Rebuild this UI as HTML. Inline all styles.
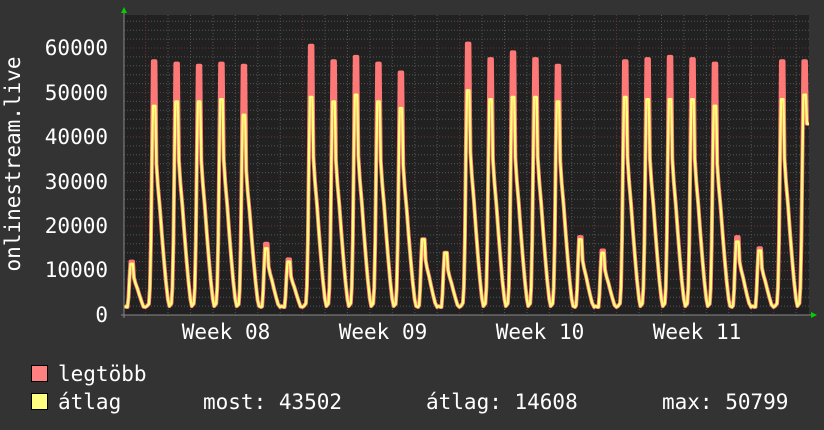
<!DOCTYPE html>
<html><head><meta charset="utf-8"><style>
html,body{margin:0;padding:0;background:#333333;}
svg{display:block}
text{font-family:"DejaVu Sans Mono","Liberation Mono",monospace;font-size:21px;fill:#ffffff}
</style></head><body>
<svg id="g" width="824" height="430" xmlns="http://www.w3.org/2000/svg">
<rect width="824" height="430" fill="#333333"/>
<rect x="124" y="15" width="685" height="300" fill="#212121"/>
<g id="grid"></g>
<defs><clipPath id="cp"><rect x="124" y="10" width="685" height="306"/></clipPath></defs>
<g clip-path="url(#cp)">
<path id="red" fill="none" stroke="#ff7878" stroke-width="4" stroke-linejoin="round"/>
<path id="yel" fill="none" stroke="#ffff78" stroke-width="2.4" stroke-linejoin="round"/>
</g>
<line x1="124" y1="12" x2="124" y2="318" stroke="#888" stroke-width="1"/>
<line x1="121" y1="315" x2="812" y2="315" stroke="#888" stroke-width="1"/>
<polygon points="121,13 127,13 124,7" fill="#00d000"/>
<polygon points="811,312 811,318 817,315" fill="#00d000"/>
<g text-anchor="end">
<text x="108" y="322">0</text>
<text x="108" y="277">10000</text>
<text x="108" y="233">20000</text>
<text x="108" y="189">30000</text>
<text x="108" y="144">40000</text>
<text x="108" y="100">50000</text>
<text x="108" y="55">60000</text>
</g>
<text transform="translate(20,164) rotate(-90)" text-anchor="middle">onlinestream.live</text>
<g text-anchor="middle">
<text x="226" y="339">Week 08</text>
<text x="383" y="339">Week 09</text>
<text x="540" y="339">Week 10</text>
<text x="697" y="339">Week 11</text>
</g>
<rect x="31.5" y="365.5" width="16" height="16" fill="#ff8080" stroke="#000"/>
<rect x="31.5" y="393.5" width="16" height="16" fill="#ffff80" stroke="#000"/>
<text x="58" y="381">legtöbb</text>
<text x="58" y="409">átlag</text>
<text x="203" y="409">most: 43502</text>
<text x="426" y="409">átlag: 14608</text>
<text x="662" y="409">max: 50799</text>
</svg>
<script>
var g=document.getElementById("grid"),s="";
function Y(v){return 315-v*0.00445;}
for(var v=2000;v<=66000;v+=2000){var y=Y(v);if(y<15)break;var maj=v%10000==0;
s+='<line x1="124" x2="809" y1="'+y.toFixed(1)+'" y2="'+y.toFixed(1)+'" stroke="'+(maj?'#6a3535':'#555')+'" stroke-dasharray="1,2"/>';}
for(var x=145.6;x<809;x+=22.43){var d=Math.round((x-145.6)/22.43);var maj=(d%7==0);
s+='<line y1="15" y2="318" x1="'+x.toFixed(1)+'" x2="'+x.toFixed(1)+'" stroke="'+(maj?'#6a3535':'#555')+'" stroke-dasharray="1,2"/>';}
g.innerHTML=s;
var R=[12000,57000,56500,56000,56500,56000,16000,12500,60500,57000,58000,56500,54500,17000,14000,61000,57500,59000,57500,56000,17500,14500,57000,57500,58000,57500,56500,17500,15000,57000,57000];
var Yv=[11500,47000,48000,48000,48500,45000,15000,12000,49000,48000,49500,48000,46500,17000,14000,50500,48500,49000,49000,48000,17000,14000,49000,48500,48500,48500,47000,16500,14500,48500,49500];
var shape=[[0,2000],[2,2500],[3,6000],[4,16000],[5,34000],[6,-1],[8.5,-1],[9.5,34000],[11,29000],[13,24000],[15,18000],[17,12500],[19,7500],[21,3500]];
function build(P){var pts=[];for(var i=0;i<31;i++){var x0=124.5+22.43*i;var sc=Yv[i]/47000;
for(var k=0;k<shape.length;k++){var v=shape[k][1];if(v<0)v=P[i];else v=Math.max(1800,v*sc);
if(i==30&&k==7)v=43000;if(i==30&&k>7)break;
if(k==0)v=2000;pts.push((x0+shape[k][0]).toFixed(1)+","+Y(v).toFixed(1));}}
pts.push("812,"+Y(43000).toFixed(1));
return "M"+pts.join("L");}
document.getElementById("red").setAttribute("d",build(R));
document.getElementById("yel").setAttribute("d",build(Yv));
</script>
</body></html>
